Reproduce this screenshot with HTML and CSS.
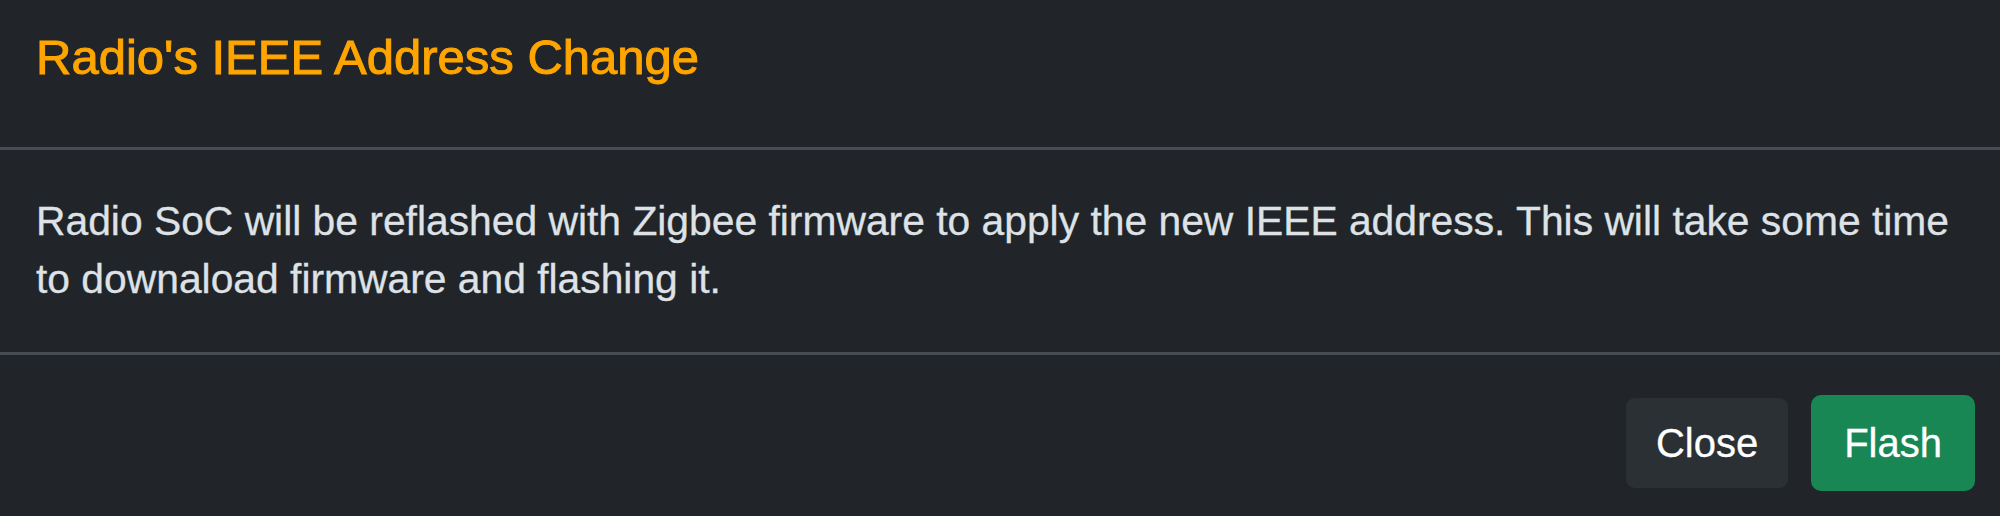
FILE: index.html
```html
<!DOCTYPE html>
<html lang="en">
<head>
<meta charset="utf-8">
<title>Radio's IEEE Address Change</title>
<link rel="stylesheet" href="styles.css">
</head>
<body>
<div class="modal">
  <div class="modal-header">
    <h5 class="modal-title">Radio's IEEE Address Change</h5>
  </div>
  <div class="modal-body">
    <p class="modal-text">Radio SoC will be reflashed with Zigbee firmware to apply the new IEEE address. This will take some time to downaload firmware and flashing it.</p>
  </div>
  <div class="modal-footer">
    <button class="btn btn-close-dark" type="button">Close</button>
    <button class="btn btn-success" type="button">Flash</button>
  </div>
</div>
</body>
</html>
```

FILE: styles.css
```css
html, body {
  margin: 0;
  padding: 0;
  background: #212529;
}

body {
  width: 2000px;
  height: 516px;
  overflow: hidden;
  font-family: "Liberation Sans", Arial, sans-serif;
  color: #dee2e6;
}

.modal {
  display: flex;
  flex-direction: column;
  background: #212529;
}

.modal-header {
  padding: 27px 25px 60px 36px;
  border-bottom: 3px solid #474c52;
}

.modal-title {
  margin: 0;
  font-size: 49px;
  line-height: 60px;
  font-weight: 400;
  color: #ffa500;
  -webkit-text-stroke: 1px #ffa500;
}

.modal-body {
  padding: 42px 25px 44px 36px;
  border-bottom: 3px solid #474c52;
}

.modal-text {
  margin: 0;
  font-size: 40.8px;
  line-height: 58px;
  -webkit-text-stroke: 0.3px #dee2e6;
}

.modal-footer {
  display: flex;
  justify-content: flex-end;
  align-items: center;
  gap: 20px;
  padding: 40px 25px 25px 36px;
}

.btn {
  font-family: "Liberation Sans", Arial, sans-serif;
  font-size: 40px;
  line-height: 60px;
  padding: 15px 30px;
  border: 3px solid transparent;
  border-radius: 10px;
  color: #ffffff;
  cursor: pointer;
  -webkit-text-stroke: 0.3px #ffffff;
}

.btn-close-dark {
  background: #2b3035;
  border-color: #212529;
  border-radius: 12px;
}

.btn-success {
  background: #198754;
  border-color: #198754;
}
```
